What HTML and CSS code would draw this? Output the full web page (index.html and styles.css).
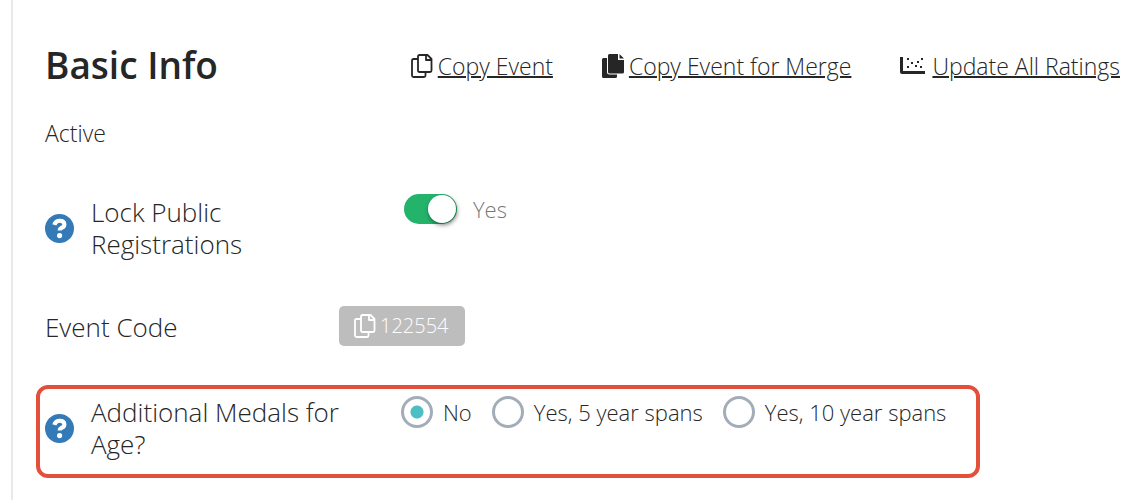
FILE: index.html
```html
<!DOCTYPE html>
<html lang="en">
<head>
    <meta charset="UTF-8">
    <meta name="viewport" content="width=device-width, initial-scale=1.0">
    <title>Basic Info</title>
    <link rel="stylesheet" href="styles.css">
</head>
<body>
    <main class="panel">
        <header class="panel-header">
            <h1>Basic Info</h1>
            <nav class="actions">
                <a href="#copy">
                    <svg class="icon" viewBox="0 0 24 26" fill="none" stroke="currentColor" stroke-width="1.800" stroke-linejoin="round"><path d="M9.500 2h8l4 4v11.500q0 1.500-1.500 1.500H9.500Q8 19 8 17.500v-14Q8 2 9.500 2z"/><path d="M16 2v5h5.500M8 6H3.500Q2 6 2 7.500v15Q2 24 3.500 24H14q1.500 0 1.500-1.500V19"/></svg>
                    <span>Copy Event</span>
                </a>
                <a href="#merge">
                    <svg class="icon" viewBox="0 0 24 26" fill="currentColor"><path d="M8.500 1H17v6h6v12q0 1.500-1.500 1.500h-13Q7 20.500 7 19V2.500Q7 1 8.500 1zM18.500 1L23 5.500h-4.500z"/><path d="M6 5H2.500Q1 5 1 6.500v17Q1 25 2.500 25h12q1.500 0 1.500-1.500v-2H8.500Q6 21.500 6 19z"/></svg>
                    <span>Copy Event for Merge</span>
                </a>
                <a href="#ratings">
                    <svg class="icon icon-chart" viewBox="0 0 29 26" fill="currentColor"><path d="M1 4h3v14h22v3H3q-2 0-2-2z"/><path d="M8 5h2v2H8zM12 9h2v2h-2zM8 13h2v2H8zM16 12h2v2h-2zM18 8h2v2h-2zM22 5h2v2h-2zM21 13h2v2h-2z"/></svg>
                    <span>Update All Ratings</span>
                </a>
            </nav>
        </header>

        <p class="status">Active</p>

        <form>
            <div class="row row-lock">
                <div class="row-label">
                    <button type="button" class="help" aria-label="Help: lock public registrations">
                        <svg viewBox="0 0 28 28"><circle cx="14" cy="14" r="14" fill="#337ab7"/><path d="M9 10.500Q10 6.500 14.200 6.500q4.500 0 4.500 3.600 0 2-2.300 3.100-2.200 1-2.200 2.800" fill="none" stroke="#fff" stroke-width="4"/><circle cx="14.100" cy="20.800" r="2.500" fill="#fff"/></svg>
                    </button>
                    <label for="lock">Lock Public Registrations</label>
                </div>
                <div class="switch-field">
                    <input type="checkbox" class="switch" id="lock" checked>
                    <span>Yes</span>
                </div>
            </div>

            <div class="row row-code">
                <span>Event Code</span>
                <button type="button" class="code">
                    <svg class="icon" viewBox="0 0 24 26" fill="none" stroke="currentColor" stroke-width="1.800" stroke-linejoin="round"><path d="M9.500 2h8l4 4v11.500q0 1.500-1.500 1.500H9.500Q8 19 8 17.500v-14Q8 2 9.500 2z"/><path d="M16 2v5h5.500M8 6H3.500Q2 6 2 7.500v15Q2 24 3.500 24H14q1.500 0 1.500-1.500V19"/></svg>
                    <span>122554</span>
                </button>
            </div>

            <div class="row row-medals" role="radiogroup" aria-labelledby="medals">
                <div class="row-label">
                    <button type="button" class="help" aria-label="Help: additional medals">
                        <svg viewBox="0 0 28 28"><circle cx="14" cy="14" r="14" fill="#337ab7"/><path d="M9 10.500Q10 6.500 14.200 6.500q4.500 0 4.500 3.600 0 2-2.300 3.100-2.200 1-2.200 2.800" fill="none" stroke="#fff" stroke-width="4"/><circle cx="14.100" cy="20.800" r="2.500" fill="#fff"/></svg>
                    </button>
                    <span id="medals">Additional Medals for Age?</span>
                </div>
                <div class="options">
                    <label><input type="radio" name="medals" value="0" checked>No</label>
                    <label><input type="radio" name="medals" value="5">Yes, 5 year spans</label>
                    <label><input type="radio" name="medals" value="10">Yes, 10 year spans</label>
                </div>
            </div>
        </form>
    </main>
</body>
</html>
```
FILE: styles.css
```css
* {
    box-sizing: border-box;
}
body {
    margin: 0;
    background: #fff;
    color: #262626;
    font-family: "Open Sans", "Noto Sans", sans-serif;
    font-size: 26px;
    font-weight: 300;
    line-height: 32px;
}
button,
input {
    margin: 0;
    font: inherit;
}
.panel {
    min-height: 100vh;
    margin-left: 11px;
    padding: 41px 21px 20px 32px;
    border-left: 2px solid #e9e9e9;
}
.panel-header {
    display: flex;
    align-items: center;
    justify-content: space-between;
}
h1 {
    margin: 0;
    color: #262626;
    font-size: 37px;
    font-weight: 600;
    line-height: 48px;
}
.actions {
    display: flex;
    gap: 48px;
    padding-top: 2px;
}
.actions a {
    display: flex;
    align-items: center;
    gap: 4px;
    color: #262626;
    font-size: 23px;
    text-decoration: none;
    white-space: nowrap;
}
.actions span {
    text-decoration: underline;
    text-decoration-thickness: 2px;
}
.icon {
    flex: none;
    width: 24px;
    height: 26px;
}
.icon-chart {
    width: 29px;
}
.status {
    margin: 28px 0 44px;
    font-size: 23px;
}
.row {
    display: flex;
    align-items: flex-start;
}
.row-label {
    display: flex;
    flex: none;
    align-items: center;
    gap: 17px;
    width: 356px;
    padding-right: 50px;
}
.help {
    flex: none;
    width: 29px;
    height: 29px;
    padding: 0;
    border: none;
    background: none;
    cursor: pointer;
}
.help svg {
    display: block;
}
.row-lock .row-label {
    width: 359px;
    padding: 3px 120px 0 0;
}
.switch-field {
    display: flex;
    align-items: center;
    gap: 16px;
    color: #777;
    font-size: 22px;
}
.switch {
    appearance: none;
    display: flex;
    justify-content: flex-end;
    width: 53px;
    height: 30px;
    border-radius: 15px;
    background: #24b36b;
    cursor: pointer;
}
.switch::before {
    content: "";
    width: 28px;
    height: 28px;
    margin: 1px;
    border-radius: 50%;
    background: #fff;
    box-shadow: 1px 2px 4px rgba(0, 0, 0, 0.5);
}
.switch:not(:checked) {
    justify-content: flex-start;
    background: #bbb;
}
.row-code {
    align-items: center;
    margin-top: 46px;
}
.row-code > span {
    width: 294px;
    padding-top: 2px;
}
.code {
    display: flex;
    align-items: center;
    gap: 3px;
    height: 40px;
    padding: 0 16px 0 14px;
    border: none;
    border-radius: 5px;
    background: #bdbdbd;
    color: #fff;
    font-size: 20px;
    cursor: pointer;
}
/* current question */
.row-medals {
    width: fit-content;
    margin: 39px 0 0 -9px;
    padding: 7px 30px 14px 5px;
    border: 4px solid #e34f3b;
    border-radius: 12px;
}
.options {
    display: flex;
    gap: 20px;
    font-size: 22px;
}
.options label {
    display: flex;
    align-items: center;
    gap: 10px;
    white-space: nowrap;
}
.options input {
    appearance: none;
    width: 32px;
    height: 32px;
    border: 3px solid #a3adb7;
    border-radius: 50%;
}
.options input:checked {
    background: radial-gradient(circle, #4bbfc3 6px, transparent 7px);
}
```
